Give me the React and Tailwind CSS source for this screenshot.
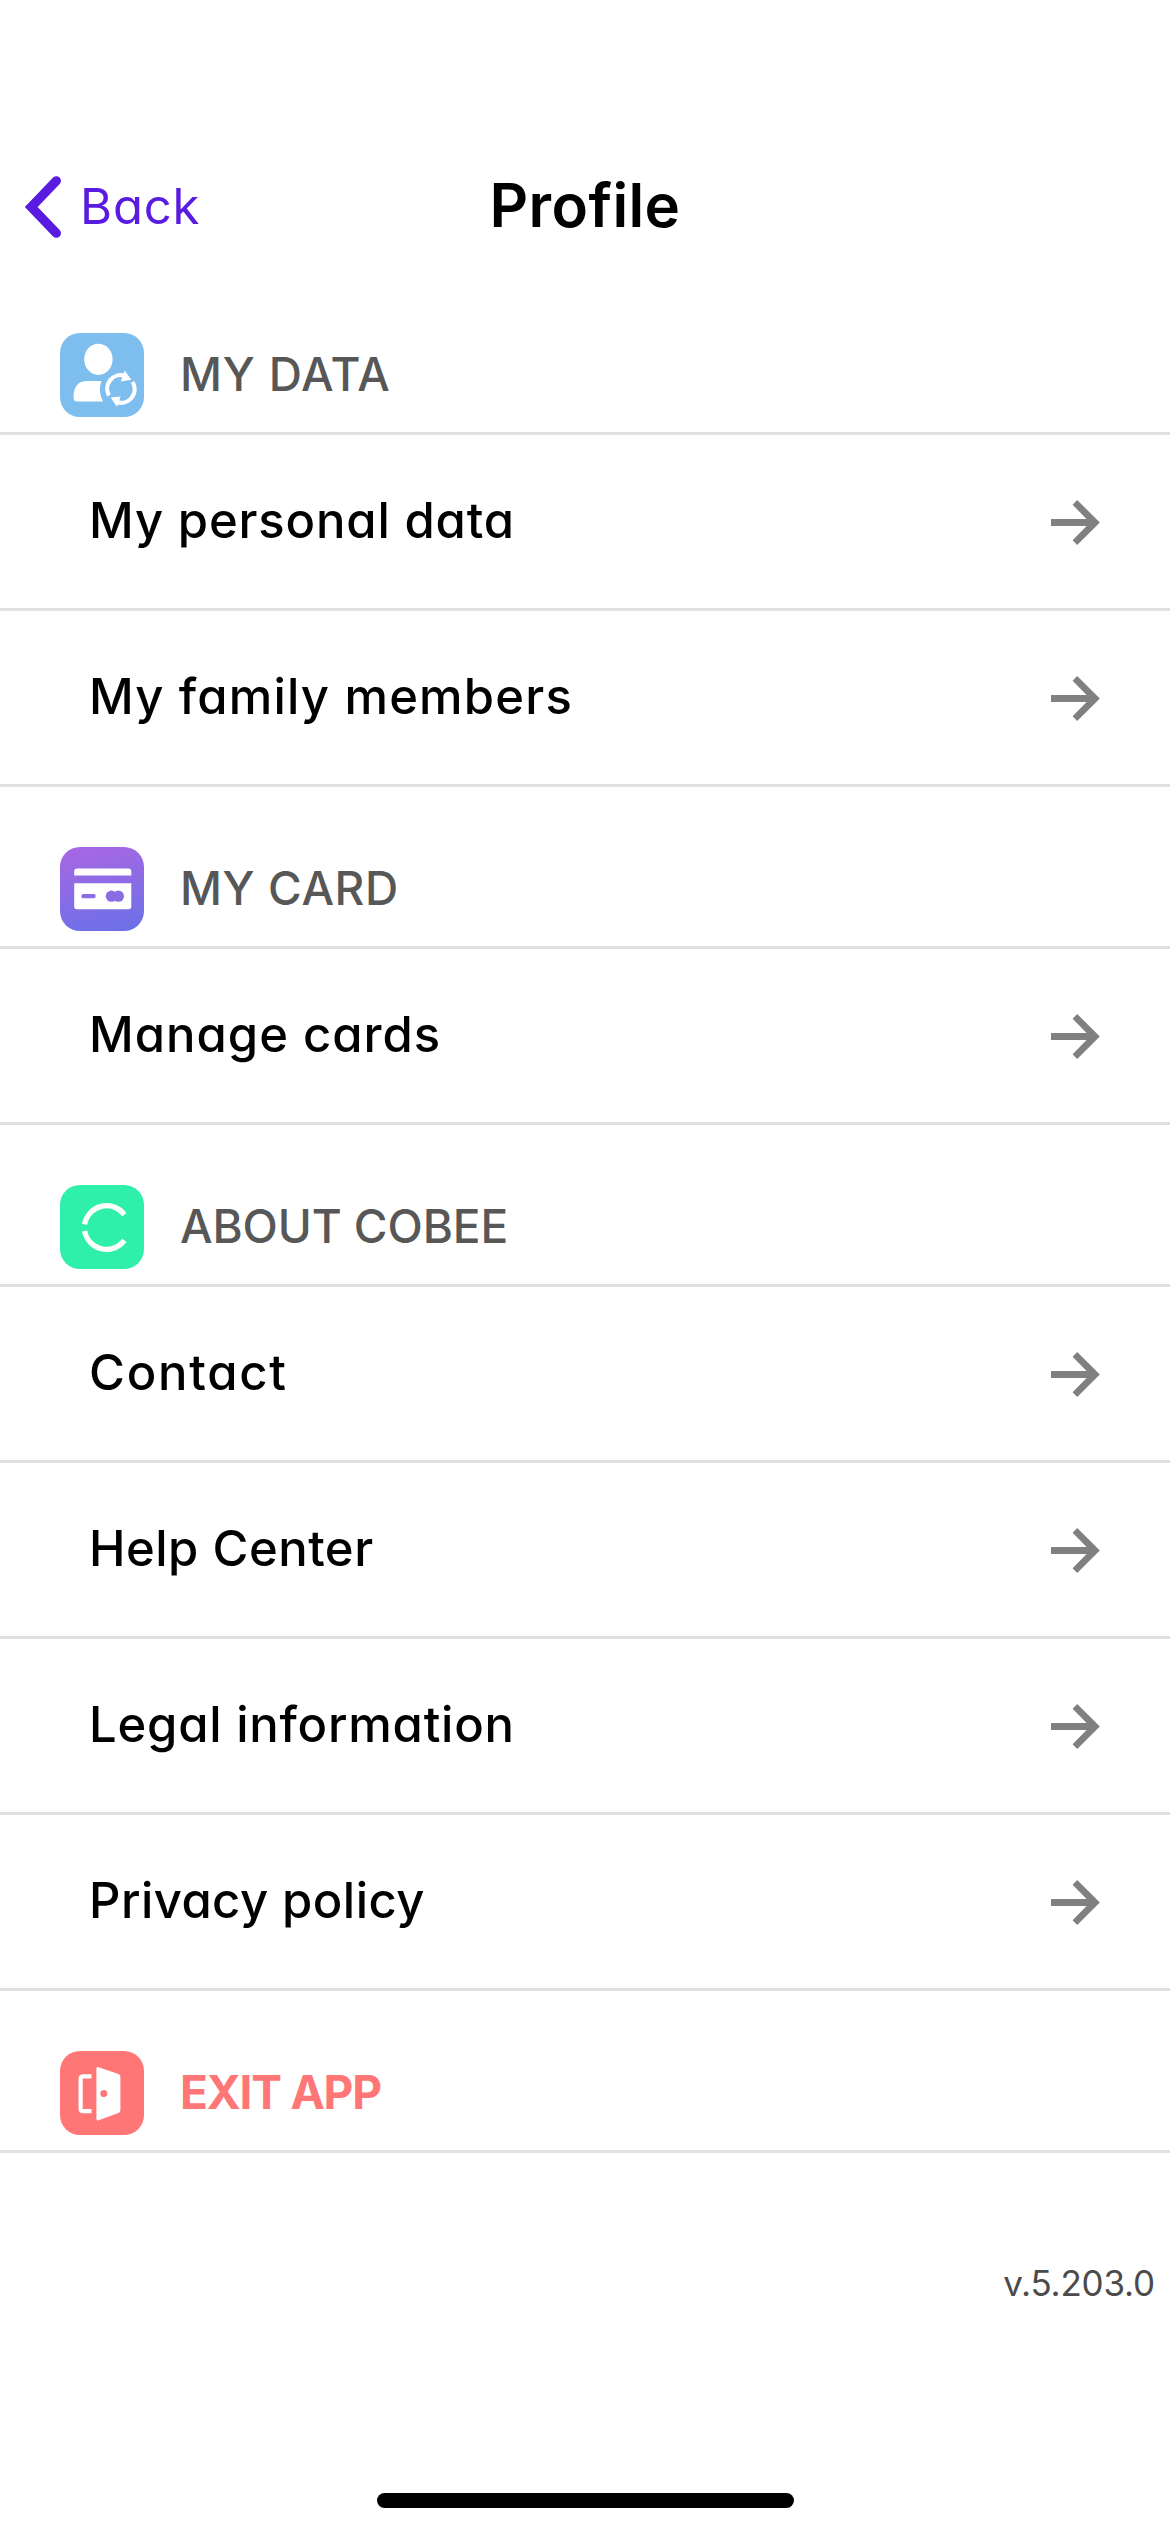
function PersonalDataIcon() {
  return (
    <svg viewBox="0 0 84 84" className="size-[84px] shrink-0">
      <rect width="84" height="84" rx="20" fill="#7dbeef" />
      <ellipse cx="38.4" cy="26.3" rx="14.2" ry="15.6" fill="#fff" />
      <path d="M27 48H41.5Q37.5 58.5 43 68.5H17Q13.5 68.5 13.5 64.5Q13.5 48 27 48Z" fill="#fff" />
      <g fill="none" stroke="#fff" strokeWidth="4.2">
        <path d="M49 62.5A13.6 13.6 0 0 1 65 42.8" />
        <path d="M72.6 49A13.6 13.6 0 0 1 56.5 69" />
      </g>
      <path d="M64.6 37.4L71.4 46.8L60.8 48.4Z" fill="#fff" />
      <path d="M57 73.8L50.6 64.4L60.6 63.4Z" fill="#fff" />
    </svg>
  )
}

function CardIcon() {
  return (
    <svg viewBox="0 0 84 84" className="size-[84px] shrink-0">
      <defs>
        <linearGradient id="card-bg" x1="0.4" y1="0" x2="0.6" y2="1">
          <stop offset="0" stopColor="#a667e3" />
          <stop offset="1" stopColor="#6e70e8" />
        </linearGradient>
      </defs>
      <rect width="84" height="84" rx="20" fill="url(#card-bg)" />
      <path d="M17 21.5H68.5Q71.3 21.5 71.3 24.5V28.5H14.2V24.5Q14.2 21.5 17 21.5Z" fill="#fff" />
      <path d="M14.2 36.2H71.3V59.5Q71.3 62.3 68.5 62.3H17Q14.2 62.3 14.2 59.5Z" fill="#fff" />
      <rect x="21.5" y="47" width="14" height="4.2" rx="1.5" fill="#8a6ce5" />
      <rect x="50" y="45" width="10" height="8.4" fill="#8a6ce5" />
      <circle cx="51.4" cy="49.2" r="5.6" fill="#8a6ce5" />
      <circle cx="58.4" cy="49.2" r="5.6" fill="#8a6ce5" />
    </svg>
  )
}

function CobeeIcon() {
  return (
    <svg viewBox="0 0 84 84" className="size-[84px] shrink-0">
      <rect width="84" height="84" rx="20" fill="#2ff0ab" />
      <g fill="none" stroke="#fff" strokeWidth="5.2">
        <path d="M24.6 39.4A22.3 22.3 0 0 1 64.4 29.6" />
        <path d="M24.6 46A22.3 22.3 0 0 0 64.4 55.4" />
      </g>
    </svg>
  )
}

function ExitIcon() {
  return (
    <svg viewBox="0 0 84 84" className="size-[84px] shrink-0">
      <rect width="84" height="84" rx="20" fill="#ff7676" />
      <path d="M31.5 25.3H23Q20.6 25.3 20.6 27.7V57.8Q20.6 60.2 23 60.2H31.5" fill="none" stroke="#fff" strokeWidth="4.2" />
      <path d="M36.4 17.5Q36.4 15.4 38.6 16.2L58.4 23Q60.4 23.8 60.4 25.8V59.2Q60.4 61.2 58.4 62L38.6 69.2Q36.4 70 36.4 67.8Z" fill="#fff" />
      <circle cx="43.8" cy="42.6" r="3.5" fill="#ff7676" />
    </svg>
  )
}

function ArrowIcon() {
  return (
    <svg viewBox="0 0 49 46" className="h-[46px] w-[49px] shrink-0" fill="#808080">
      <path d="M0 19.9H35.6L21.6 5.8L26.2 1L48.8 23.5L26.2 46L21.6 41.2L35.6 27.1H0Z" />
    </svg>
  )
}

const SECTIONS = [
  {
    title: 'MY DATA',
    titleClass: 'font-medium tracking-[0.8px] text-[#575757]',
    icon: PersonalDataIcon,
    items: [
      { label: 'My personal data', className: 'tracking-[0.83px]' },
      { label: 'My family members', className: 'tracking-[1.18px]' },
    ],
  },
  {
    title: 'MY CARD',
    titleClass: 'font-medium tracking-[0.6px] text-[#575757]',
    icon: CardIcon,
    items: [{ label: 'Manage cards', className: 'tracking-[1px]' }],
  },
  {
    title: 'ABOUT COBEE',
    titleClass: 'font-medium tracking-[-0.1px] text-[#575757]',
    icon: CobeeIcon,
    items: [
      { label: 'Contact', className: 'tracking-[1.75px]' },
      { label: 'Help Center', className: 'tracking-[0.5px]' },
      { label: 'Legal information', className: 'tracking-[0.77px]' },
      { label: 'Privacy policy', className: 'tracking-[0.45px]' },
    ],
  },
  {
    title: 'EXIT APP',
    titleClass: 'font-bold tracking-[-1.2px] text-[#ff7676]',
    icon: ExitIcon,
    items: [],
  },
]

function SectionHeader({ title, titleClass, icon: Icon }) {
  return (
    <div className="flex items-center gap-9 border-b-3 border-[#e1e1e1] pt-[60px] pb-[15px] pl-[60px]">
      <Icon />
      <h2 className={`pb-[2px] text-[46px] leading-[60px] ${titleClass}`}>{title}</h2>
    </div>
  )
}

function MenuRow({ label, className }) {
  return (
    <button
      type="button"
      className="flex h-[176px] w-full items-center justify-between border-b-3 border-[#e1e1e1] pr-[70px] pl-[89px] text-left"
    >
      <span className={`pb-px text-[49px] leading-[60px] font-medium text-black ${className}`}>{label}</span>
      <ArrowIcon />
    </button>
  )
}

export default function App() {
  return (
    <div className="flex h-[2532px] w-[1170px] flex-col bg-white font-['Inter',sans-serif] [font-feature-settings:'cv11']">
      <header className="mt-[141px] grid h-[132px] shrink-0 grid-cols-3 items-center">
        <button type="button" className="flex items-center gap-[19px] pl-6 text-[#5a1be0]">
          <svg viewBox="0 0 37 62" className="h-[62px] w-[37px]" fill="none" stroke="currentColor">
            <path d="M32.4 4.8L7.2 31L32.4 57.2" strokeWidth="9.2" strokeLinecap="round" />
          </svg>
          <span className="text-[49px] leading-[60px] tracking-[0.83px]">Back</span>
        </button>
        <h1 className="pb-[4px] text-center text-[60px] leading-[70px] font-semibold tracking-[0.37px] text-black">Profile</h1>
      </header>

      <main>
        {SECTIONS.map(({ items, ...section }) => (
          <section key={section.title}>
            <SectionHeader {...section} />
            {items.map((item) => (
              <MenuRow key={item.label} {...item} />
            ))}
          </section>
        ))}
      </main>

      <p className="mt-[100px] pr-[15px] text-right text-[35px] leading-[60px] tracking-[-0.2px] text-[#4b4b4b]">v.5.203.0</p>
      <div className="mt-[180px] h-[15px] w-[417px] self-center rounded-full bg-black" />
    </div>
  )
}
